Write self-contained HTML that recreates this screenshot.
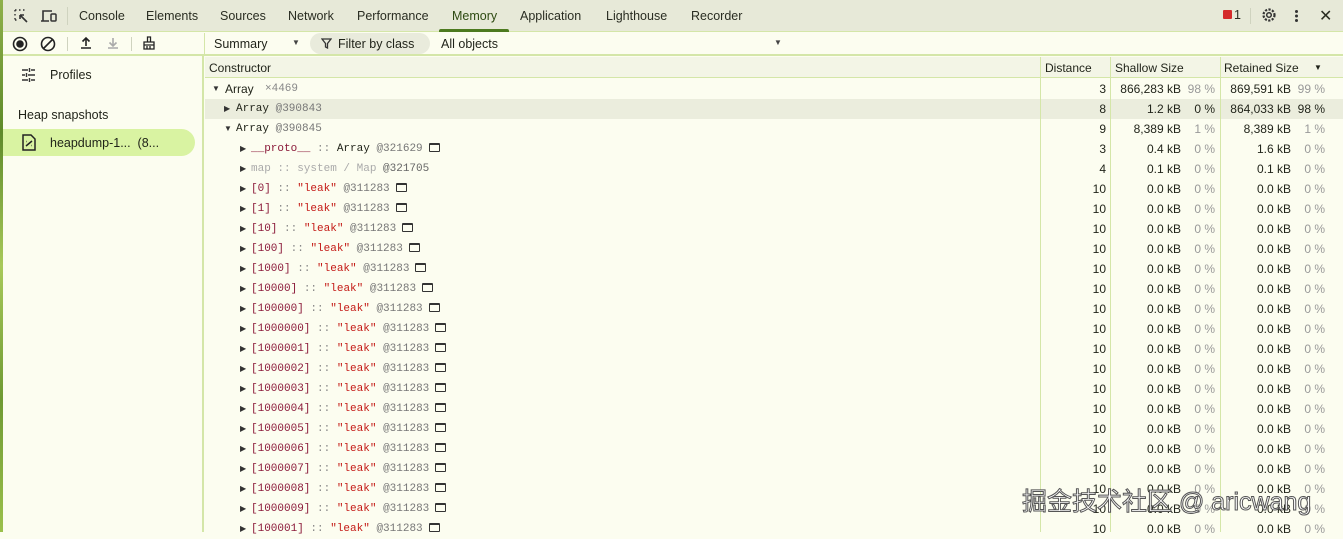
<!DOCTYPE html>
<html><head><meta charset="utf-8"><style>
*{box-sizing:border-box;margin:0;padding:0}
body{width:1343px;height:532px;overflow:hidden;background:#fcfdf0;font-family:"Liberation Sans",Arial,sans-serif;font-size:12px;color:#1f2218;position:relative}
.abs{position:absolute}
#strip{left:0;top:0;width:3px;height:532px;background:linear-gradient(#8fb04a,#5e8a2a,#a8c95a,#6f9a33,#9bc04c)}
#tabs{left:3px;top:0;width:1340px;height:32px;background:#e7e9d8;border-bottom:1px solid #d4e6a8}
.tab{position:absolute;top:9px;font-size:12.5px;color:#2a2d22}
#memu{left:439px;top:29px;width:70px;height:3px;background:#4d7a1f;border-radius:2px 2px 0 0}
#tool{left:3px;top:33px;width:1340px;height:23px;background:#fcfdf0;border-bottom:2px solid #d4e6a8}
#side{left:3px;top:56px;width:201px;height:476px;border-right:2px solid #d4e6a8;background:#fcfdf0}
#sel{left:3px;top:129px;width:192px;height:27px;background:#d9f3a2;border-radius:0 14px 14px 0}
#hdr{left:205px;top:57px;width:1138px;height:21px;background:#f3f5e6;border-bottom:1px solid #d4e6a8}
.vl{position:absolute;top:57px;width:1px;height:475px;background:#d4e6a8}
.row{position:absolute;left:205px;width:1138px;height:20px;font-size:12px}
.m{font-family:"Liberation Mono",monospace;font-size:11px;position:absolute;top:4px;white-space:pre}
.tri{position:absolute;top:5px;font-size:8px;color:#333}
.d,.sv,.sp,.rv,.rp{position:absolute;top:3px;white-space:nowrap}
.d{right:237px}.sv{right:162px}.sp{right:128px;color:#999}.rv{right:52px}.rp{right:18px;color:#999}
.k{color:#8b1a3a}.s{color:#c41a16}.g{color:#888}.id{color:#777}
.box{display:inline-block;width:11px;height:9px;border:1.5px solid #333;border-top-width:2.5px;border-radius:1px;vertical-align:-1px;margin-left:6px}
</style></head><body>
<div id="strip" class="abs"></div>
<div id="tabs" class="abs">
<svg class="abs" style="left:10px;top:8px" width="16" height="16" viewBox="0 0 16 16"><path d="M2 2h2M6 2h2M10 2h2M2 2v2M2 6v2M2 10v2M2 12h2" stroke="#333" stroke-width="1.4" fill="none" stroke-dasharray="1.5 1.2"/><path d="M7 7l7 7M7 7h4M7 7v4" stroke="#333" stroke-width="1.6" fill="none"/></svg>
<svg class="abs" style="left:37px;top:8px" width="18" height="16" viewBox="0 0 18 16"><path d="M3 13V3h9M1 13h8" stroke="#333" stroke-width="1.6" fill="none"/><rect x="11" y="6" width="5" height="7" stroke="#333" stroke-width="1.5" fill="none" rx="1"/></svg>
<div class="abs" style="left:64px;top:7px;width:1px;height:18px;background:#cfd3bf"></div>
<span class="tab" style="left:76px">Console</span>
<span class="tab" style="left:143px">Elements</span>
<span class="tab" style="left:217px">Sources</span>
<span class="tab" style="left:285px">Network</span>
<span class="tab" style="left:354px">Performance</span>
<span class="tab" style="left:449px;color:#2e4a12">Memory</span>
<span class="tab" style="left:517px">Application</span>
<span class="tab" style="left:603px">Lighthouse</span>
<span class="tab" style="left:688px">Recorder</span>
<div class="abs" style="left:1220px;top:10px;width:9px;height:9px;background:#d42b2b;border-radius:1px"></div>
<span class="tab" style="left:1231px;top:8px">1</span>
<div class="abs" style="left:1247px;top:8px;width:1px;height:16px;background:#cfd3bf"></div>
<svg class="abs" style="left:1258px;top:7px" width="16" height="16" viewBox="0 0 16 16"><circle cx="8" cy="8" r="2.3" stroke="#333" stroke-width="1.5" fill="none"/><circle cx="8" cy="8" r="5.5" stroke="#333" stroke-width="2.2" fill="none" stroke-dasharray="2.2 1.4"/></svg>
<div class="abs" style="left:1292px;top:10px;width:3px;height:3px;background:#333;border-radius:50%;box-shadow:0 4.5px 0 #333,0 9px 0 #333"></div>
<span class="tab" style="left:1316px;top:6px;font-size:16px">✕</span>
</div>
<div id="memu" class="abs"></div>
<div id="tool" class="abs">
<svg class="abs" style="left:9px;top:3px" width="16" height="16"><circle cx="8" cy="8" r="6.5" stroke="#222" stroke-width="1.6" fill="none"/><circle cx="8" cy="8" r="3.8" fill="#222"/></svg>
<svg class="abs" style="left:37px;top:3px" width="16" height="16"><circle cx="8" cy="8" r="6.5" stroke="#222" stroke-width="1.6" fill="none"/><path d="M3.5 12.5l9-9" stroke="#222" stroke-width="1.6"/></svg>
<div class="abs" style="left:64px;top:4px;width:1px;height:14px;background:#cfd3bf"></div>
<svg class="abs" style="left:75px;top:2px" width="16" height="16"><path d="M8 11V3M4.5 6.5L8 3l3.5 3.5M3 13h10" stroke="#222" stroke-width="1.6" fill="none"/></svg>
<svg class="abs" style="left:102px;top:2px" width="16" height="16"><path d="M8 3v8M4.5 7.5L8 11l3.5-3.5M3 13h10" stroke="#aaa" stroke-width="1.6" fill="none"/></svg>
<div class="abs" style="left:128px;top:4px;width:1px;height:14px;background:#cfd3bf"></div>
<svg class="abs" style="left:138px;top:2px" width="16" height="16"><path d="M6.5 2h3v5h-3zM3 7h10v3H3zM3 10v4h10v-4M6 11v3M9 11v3" stroke="#222" stroke-width="1.3" fill="none"/></svg>
<div class="abs" style="left:201px;top:0;width:1px;height:23px;background:#d4e6a8"></div>
<span class="abs" style="left:211px;top:4px;font-size:12.5px">Summary</span>
<span class="abs" style="left:289px;top:5px;font-size:8px;color:#444">▼</span>
<div class="abs" style="left:307px;top:0px;width:120px;height:21px;background:#e9ebdc;border-radius:11px"></div>
<svg class="abs" style="left:318px;top:5px" width="11" height="11"><path d="M1 1h9L6.5 5.5V10L4.5 9V5.5z" stroke="#333" stroke-width="1.3" fill="none"/></svg>
<span class="abs" style="left:335px;top:4px;font-size:12.5px">Filter by class</span>
<span class="abs" style="left:438px;top:4px;font-size:12.5px">All objects</span>
<span class="abs" style="left:771px;top:5px;font-size:8px;color:#444">▼</span>
</div>
<div id="side" class="abs"></div>
<svg class="abs" style="left:21px;top:68px" width="15" height="14"><path d="M1 2h6M10 2h4M1 7h3M7 7h7M1 12h6M10 12h4M8.5 0v4M5.5 5v4M8.5 10v4" stroke="#333" stroke-width="1.4"/></svg>
<span class="abs" style="left:50px;top:68px;font-size:12.5px">Profiles</span>
<span class="abs" style="left:18px;top:108px;font-size:12.5px">Heap snapshots</span>
<div id="sel" class="abs"></div>
<svg class="abs" style="left:22px;top:134px" width="14" height="17"><path d="M1 1h8l4 4v11H1z" stroke="#222" stroke-width="1.5" fill="none"/><path d="M4 12l6-5M4.5 7.5h.5M9.5 11.5h.5" stroke="#222" stroke-width="1.5"/></svg>
<span class="abs" style="left:50px;top:136px;font-size:12.5px">heapdump-1...&nbsp; (8...</span>
<div id="hdr" class="abs"></div>
<span class="abs" style="left:209px;top:61px">Constructor</span>
<span class="abs" style="left:1045px;top:61px">Distance</span>
<span class="abs" style="left:1115px;top:61px">Shallow Size</span>
<span class="abs" style="left:1224px;top:61px">Retained Size</span>
<span class="abs" style="left:1314px;top:63px;font-size:8px">▼</span>
<div class="row" style="top:99px;height:20px;background:#ebeddd"></div>
<div class="vl" style="left:1040px"></div>
<div class="vl" style="left:1110px"></div>
<div class="vl" style="left:1220px"></div>

<div class="row" style="top:79px"><span class="tri" style="left:7px">▼</span><span class="abs" style="left:20px;top:3px">Array</span><span class="m g" style="left:60px">×4469</span><span class="d">3</span><span class="sv">866,283 kB</span><span class="sp">98 %</span><span class="rv">869,591 kB</span><span class="rp">99 %</span></div>
<div class="row" style="top:99px"><span class="tri" style="left:19px">▶</span><span class="m" style="left:31px">Array <span class="id">@390843</span></span><span class="d">8</span><span class="sv">1.2 kB</span><span class="sp" style="color:#1f2218">0 %</span><span class="rv">864,033 kB</span><span class="rp" style="color:#1f2218">98 %</span></div>
<div class="row" style="top:119px"><span class="tri" style="left:19px">▼</span><span class="m" style="left:31px">Array <span class="id">@390845</span></span><span class="d">9</span><span class="sv">8,389 kB</span><span class="sp">1 %</span><span class="rv">8,389 kB</span><span class="rp">1 %</span></div>
<div class="row" style="top:139px"><span class="tri" style="left:35px">▶</span><span class="m" style="left:46px"><span class="k">__proto__</span> <span class="g">::</span> Array <span class="id">@321629</span><span class="box"></span></span><span class="d">3</span><span class="sv">0.4 kB</span><span class="sp">0 %</span><span class="rv">1.6 kB</span><span class="rp">0 %</span></div>
<div class="row" style="top:159px"><span class="tri" style="left:35px">▶</span><span class="m" style="left:46px;color:#aaa">map :: system / Map <span style="color:#666">@321705</span></span><span class="d">4</span><span class="sv">0.1 kB</span><span class="sp">0 %</span><span class="rv">0.1 kB</span><span class="rp">0 %</span></div>

<div class="row" style="top:179px"><span class="tri" style="left:35px">▶</span><span class="m" style="left:46px"><span class="k">[0]</span> <span class="g">::</span> <span class="s">"leak"</span> <span class="id">@311283</span><span class="box"></span></span><span class="d">10</span><span class="sv">0.0 kB</span><span class="sp">0 %</span><span class="rv">0.0 kB</span><span class="rp">0 %</span></div>
<div class="row" style="top:199px"><span class="tri" style="left:35px">▶</span><span class="m" style="left:46px"><span class="k">[1]</span> <span class="g">::</span> <span class="s">"leak"</span> <span class="id">@311283</span><span class="box"></span></span><span class="d">10</span><span class="sv">0.0 kB</span><span class="sp">0 %</span><span class="rv">0.0 kB</span><span class="rp">0 %</span></div>
<div class="row" style="top:219px"><span class="tri" style="left:35px">▶</span><span class="m" style="left:46px"><span class="k">[10]</span> <span class="g">::</span> <span class="s">"leak"</span> <span class="id">@311283</span><span class="box"></span></span><span class="d">10</span><span class="sv">0.0 kB</span><span class="sp">0 %</span><span class="rv">0.0 kB</span><span class="rp">0 %</span></div>
<div class="row" style="top:239px"><span class="tri" style="left:35px">▶</span><span class="m" style="left:46px"><span class="k">[100]</span> <span class="g">::</span> <span class="s">"leak"</span> <span class="id">@311283</span><span class="box"></span></span><span class="d">10</span><span class="sv">0.0 kB</span><span class="sp">0 %</span><span class="rv">0.0 kB</span><span class="rp">0 %</span></div>
<div class="row" style="top:259px"><span class="tri" style="left:35px">▶</span><span class="m" style="left:46px"><span class="k">[1000]</span> <span class="g">::</span> <span class="s">"leak"</span> <span class="id">@311283</span><span class="box"></span></span><span class="d">10</span><span class="sv">0.0 kB</span><span class="sp">0 %</span><span class="rv">0.0 kB</span><span class="rp">0 %</span></div>
<div class="row" style="top:279px"><span class="tri" style="left:35px">▶</span><span class="m" style="left:46px"><span class="k">[10000]</span> <span class="g">::</span> <span class="s">"leak"</span> <span class="id">@311283</span><span class="box"></span></span><span class="d">10</span><span class="sv">0.0 kB</span><span class="sp">0 %</span><span class="rv">0.0 kB</span><span class="rp">0 %</span></div>
<div class="row" style="top:299px"><span class="tri" style="left:35px">▶</span><span class="m" style="left:46px"><span class="k">[100000]</span> <span class="g">::</span> <span class="s">"leak"</span> <span class="id">@311283</span><span class="box"></span></span><span class="d">10</span><span class="sv">0.0 kB</span><span class="sp">0 %</span><span class="rv">0.0 kB</span><span class="rp">0 %</span></div>
<div class="row" style="top:319px"><span class="tri" style="left:35px">▶</span><span class="m" style="left:46px"><span class="k">[1000000]</span> <span class="g">::</span> <span class="s">"leak"</span> <span class="id">@311283</span><span class="box"></span></span><span class="d">10</span><span class="sv">0.0 kB</span><span class="sp">0 %</span><span class="rv">0.0 kB</span><span class="rp">0 %</span></div>
<div class="row" style="top:339px"><span class="tri" style="left:35px">▶</span><span class="m" style="left:46px"><span class="k">[1000001]</span> <span class="g">::</span> <span class="s">"leak"</span> <span class="id">@311283</span><span class="box"></span></span><span class="d">10</span><span class="sv">0.0 kB</span><span class="sp">0 %</span><span class="rv">0.0 kB</span><span class="rp">0 %</span></div>
<div class="row" style="top:359px"><span class="tri" style="left:35px">▶</span><span class="m" style="left:46px"><span class="k">[1000002]</span> <span class="g">::</span> <span class="s">"leak"</span> <span class="id">@311283</span><span class="box"></span></span><span class="d">10</span><span class="sv">0.0 kB</span><span class="sp">0 %</span><span class="rv">0.0 kB</span><span class="rp">0 %</span></div>
<div class="row" style="top:379px"><span class="tri" style="left:35px">▶</span><span class="m" style="left:46px"><span class="k">[1000003]</span> <span class="g">::</span> <span class="s">"leak"</span> <span class="id">@311283</span><span class="box"></span></span><span class="d">10</span><span class="sv">0.0 kB</span><span class="sp">0 %</span><span class="rv">0.0 kB</span><span class="rp">0 %</span></div>
<div class="row" style="top:399px"><span class="tri" style="left:35px">▶</span><span class="m" style="left:46px"><span class="k">[1000004]</span> <span class="g">::</span> <span class="s">"leak"</span> <span class="id">@311283</span><span class="box"></span></span><span class="d">10</span><span class="sv">0.0 kB</span><span class="sp">0 %</span><span class="rv">0.0 kB</span><span class="rp">0 %</span></div>
<div class="row" style="top:419px"><span class="tri" style="left:35px">▶</span><span class="m" style="left:46px"><span class="k">[1000005]</span> <span class="g">::</span> <span class="s">"leak"</span> <span class="id">@311283</span><span class="box"></span></span><span class="d">10</span><span class="sv">0.0 kB</span><span class="sp">0 %</span><span class="rv">0.0 kB</span><span class="rp">0 %</span></div>
<div class="row" style="top:439px"><span class="tri" style="left:35px">▶</span><span class="m" style="left:46px"><span class="k">[1000006]</span> <span class="g">::</span> <span class="s">"leak"</span> <span class="id">@311283</span><span class="box"></span></span><span class="d">10</span><span class="sv">0.0 kB</span><span class="sp">0 %</span><span class="rv">0.0 kB</span><span class="rp">0 %</span></div>
<div class="row" style="top:459px"><span class="tri" style="left:35px">▶</span><span class="m" style="left:46px"><span class="k">[1000007]</span> <span class="g">::</span> <span class="s">"leak"</span> <span class="id">@311283</span><span class="box"></span></span><span class="d">10</span><span class="sv">0.0 kB</span><span class="sp">0 %</span><span class="rv">0.0 kB</span><span class="rp">0 %</span></div>
<div class="row" style="top:479px"><span class="tri" style="left:35px">▶</span><span class="m" style="left:46px"><span class="k">[1000008]</span> <span class="g">::</span> <span class="s">"leak"</span> <span class="id">@311283</span><span class="box"></span></span><span class="d">10</span><span class="sv">0.0 kB</span><span class="sp">0 %</span><span class="rv">0.0 kB</span><span class="rp">0 %</span></div>
<div class="row" style="top:499px"><span class="tri" style="left:35px">▶</span><span class="m" style="left:46px"><span class="k">[1000009]</span> <span class="g">::</span> <span class="s">"leak"</span> <span class="id">@311283</span><span class="box"></span></span><span class="d">10</span><span class="sv">0.0 kB</span><span class="sp">0 %</span><span class="rv">0.0 kB</span><span class="rp">0 %</span></div>
<div class="row" style="top:519px"><span class="tri" style="left:35px">▶</span><span class="m" style="left:46px"><span class="k">[100001]</span> <span class="g">::</span> <span class="s">"leak"</span> <span class="id">@311283</span><span class="box"></span></span><span class="d">10</span><span class="sv">0.0 kB</span><span class="sp">0 %</span><span class="rv">0.0 kB</span><span class="rp">0 %</span></div>

<div class="abs" style="left:1022px;top:482px;font-family:'Liberation Sans','Noto Sans CJK SC',sans-serif;font-size:25px;color:#fff;-webkit-text-stroke:1px #555;white-space:nowrap">掘金技术社区 @ aricwang</div>
</body></html>
